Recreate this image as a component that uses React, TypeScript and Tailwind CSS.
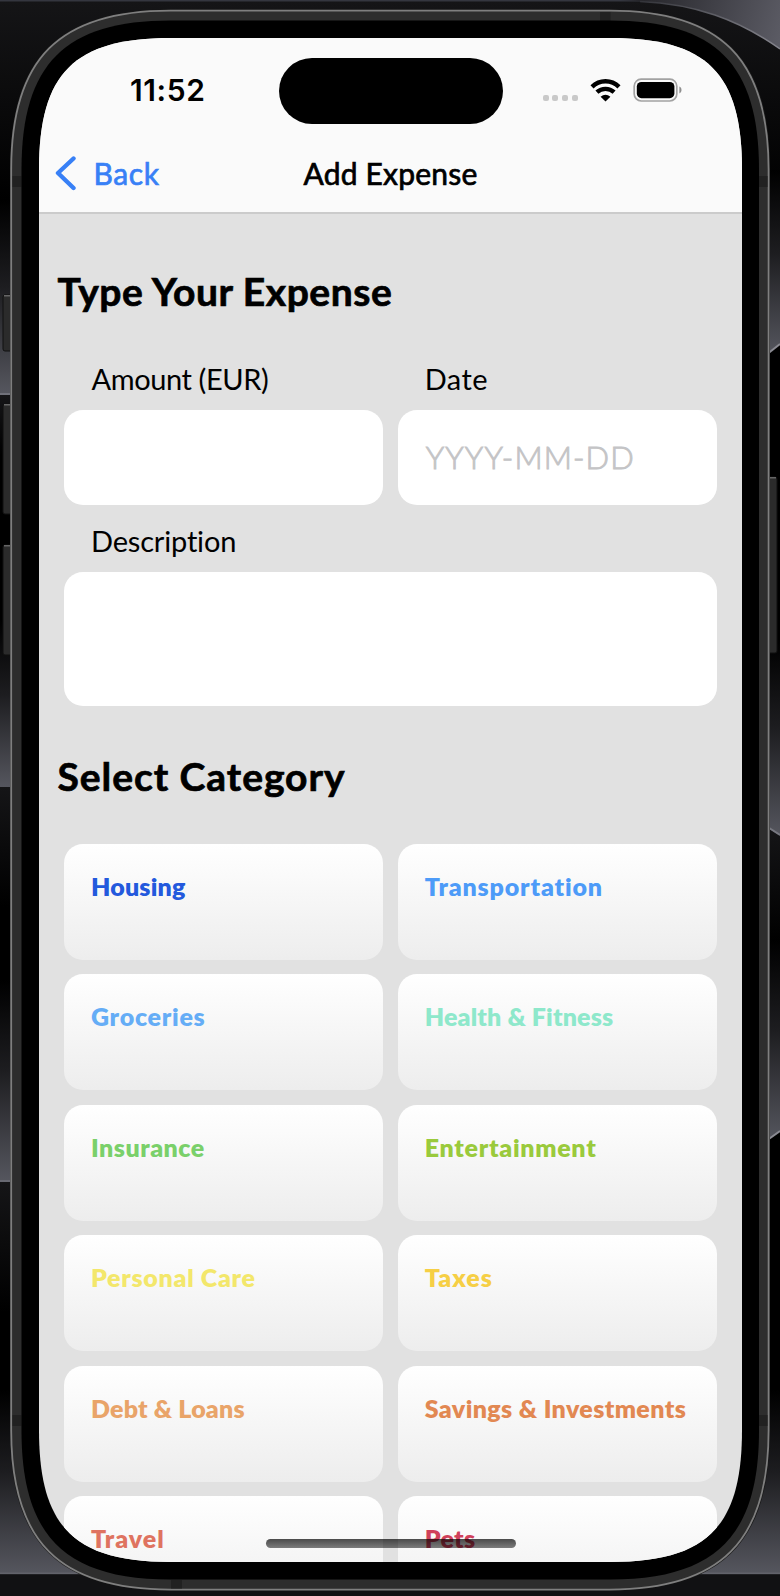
type Category = { name: string; style: string };

const categories: Category[] = [
  { name: 'Housing', style: 'text-[#2359dd] tracking-[0.17px]' },
  { name: 'Transportation', style: 'text-[#4d9bf8] tracking-[0.83px]' },
  { name: 'Groceries', style: 'text-[#65adf6] tracking-[0.72px]' },
  { name: 'Health & Fitness', style: 'text-[#8ee8cb] tracking-[0.15px]' },
  { name: 'Insurance', style: 'text-[#7ad06a] tracking-[0.5px]' },
  { name: 'Entertainment', style: 'text-[#9aca3c] tracking-[0.7px]' },
  { name: 'Personal Care', style: 'text-[#f3e76b] tracking-[0.7px]' },
  { name: 'Taxes', style: 'text-[#f6cf45] tracking-[1px]' },
  { name: 'Debt & Loans', style: 'text-[#e9a469] tracking-[0.18px]' },
  { name: 'Savings & Investments', style: 'text-[#e28852] tracking-[0.38px]' },
  { name: 'Travel', style: 'text-[#df7360] tracking-[0.95px]' },
  { name: 'Pets', style: 'text-[#d0405a] tracking-[0.3px]' },
];

/** Rounded rectangle with continuous corners: e is the corner extent, k the control offset. */
function squircle(x: number, y: number, w: number, h: number, e: number, k: number) {
  const r = x + w;
  const b = y + h;
  return [
    `M${x} ${y + e}`,
    `C${x} ${y + k} ${x + k} ${y} ${x + e} ${y}`,
    `H${r - e}`,
    `C${r - k} ${y} ${r} ${y + k} ${r} ${y + e}`,
    `V${b - e}`,
    `C${r} ${b - k} ${r - k} ${b} ${r - e} ${b}`,
    `H${x + e}`,
    `C${x + k} ${b} ${x} ${b - k} ${x} ${b - e}`,
    'Z',
  ].join('');
}

function Device() {
  return (
    <svg className="absolute inset-0" width="780" height="1596" viewBox="0 0 780 1596" fill="none">
      <defs>
        <linearGradient id="glow" x1="0" y1="0" x2="0" y2="1">
          <stop offset="0" stopColor="#000" />
          <stop offset="0.45" stopColor="#1d1d20" />
          <stop offset="1" stopColor="#55565e" />
        </linearGradient>
        <linearGradient id="fade" x1="0" y1="0" x2="0" y2="1">
          <stop offset="0" stopColor="#151517" />
          <stop offset="1" stopColor="#000" />
        </linearGradient>
        <linearGradient id="corner" x1="640" y1="0" x2="780" y2="40" gradientUnits="userSpaceOnUse">
          <stop offset="0" stopColor="#26262b" />
          <stop offset="1" stopColor="#5b5b64" />
        </linearGradient>
        <linearGradient id="edge" x1="640" y1="0" x2="780" y2="0" gradientUnits="userSpaceOnUse">
          <stop offset="0" stopColor="#33343a" />
          <stop offset="1" stopColor="#85858d" />
        </linearGradient>
      </defs>
      <rect width="780" height="1596" fill="#000" />
      <rect width="780" height="200" fill="url(#fade)" />
      <rect width="780" height="1.5" fill="#34363f" />
      <path d="M620 0C690 2 735 17 780 49V0Z" fill="url(#corner)" />
      <path d="M640 1.5C695 4 738 19 780 49" stroke="url(#edge)" strokeWidth="1.5" />

      <rect x="0" y="200" width="14" height="193" fill="url(#glow)" />
      <rect x="0" y="393" width="14" height="2" fill="#70717a" />
      <rect x="0" y="395" width="14" height="60" fill="url(#fade)" />
      <rect x="0" y="620" width="14" height="167" fill="url(#glow)" />
      <rect x="0" y="787" width="14" height="120" fill="url(#fade)" />
      <rect x="0" y="980" width="14" height="201" fill="url(#glow)" />
      <rect x="0" y="1180" width="14" height="2" fill="#686972" />
      <rect x="0" y="1182" width="14" height="130" fill="url(#fade)" />

      <path d="M766 170H780V344L766 355Z" fill="url(#glow)" />
      <path d="M766 355L780 344" stroke="#8a8a92" strokeWidth="2" />
      <path d="M766 640H780V836L766 827Z" fill="url(#glow)" />
      <path d="M766 827L780 836V940H766Z" fill="url(#fade)" />
      <path d="M766 826L780 835" stroke="#777880" strokeWidth="2" />
      <path d="M766 940H780V1131L766 1141Z" fill="url(#glow)" />
      <path d="M766 1141L780 1131" stroke="#8a8a92" strokeWidth="2" />

      <rect x="0" y="1390" width="780" height="183" fill="url(#glow)" />
      <rect x="0" y="1572.5" width="780" height="2" fill="#62636b" />
      <rect x="0" y="1574.5" width="780" height="22" fill="#111113" />

      <rect x="3" y="295" width="12" height="56" rx="2" fill="#2b2b2b" stroke="#111" />
      <rect x="4" y="295" width="8" height="1.5" fill="#666" />
      <rect x="3" y="404" width="12" height="110" rx="2" fill="#2b2b2b" stroke="#111" />
      <rect x="4" y="404" width="8" height="1.5" fill="#666" />
      <rect x="3" y="545" width="12" height="110" rx="2" fill="#2b2b2b" stroke="#111" />
      <rect x="4" y="545" width="8" height="1.5" fill="#666" />
      <rect x="765" y="477" width="12" height="176" rx="2" fill="#2b2b2b" stroke="#111" />
      <rect x="768" y="477" width="8" height="1.5" fill="#666" />

      <path d={squircle(10, 9.5, 760, 1581, 160, 48)} fill="#1a1a1a" />
      <path d={squircle(11.2, 10.6, 757.4, 1579, 159, 48)} fill="#2d2d2d" stroke="#7f7f7f" strokeWidth="1.8" />
      <g fill="#212121">
        <rect x="12.5" y="176" width="9" height="11" />
        <rect x="759" y="176" width="8.5" height="11" />
        <rect x="12.5" y="1415" width="9" height="11" />
        <rect x="759" y="1415" width="8.5" height="11" />
        <rect x="600" y="12" width="10.5" height="9" />
        <rect x="171" y="1580" width="11" height="8.5" />
      </g>
      <path d={squircle(21.5, 20.5, 737.5, 1559, 149, 43.5)} fill="#000" />
    </svg>
  );
}

function WifiIcon() {
  return (
    <svg className="ml-[12px] mt-[79px]" width="31" height="23" viewBox="0 0 31 23" fill="none" stroke="#000" strokeWidth="4.4">
      <path d="M2 7.8C9.6 .4 21.4 .4 29 7.8" />
      <path d="M6.9 13.2C11.8 8.7 19.2 8.7 24.1 13.2" />
      <path d="M15.5 22.5L10.6 17.7C13.6 15 17.4 15 20.4 17.7Z" fill="#000" stroke="none" />
    </svg>
  );
}

function BatteryIcon() {
  return (
    <svg className="ml-[12.5px] mt-[78px]" width="50" height="25" viewBox="0 0 50 25" fill="none">
      <rect x="1.2" y="1.2" width="42.6" height="21.8" rx="7" stroke="#a2a2a2" strokeWidth="1.7" />
      <rect x="3.8" y="4" width="37.6" height="16.2" rx="4.6" fill="#000" />
      <path d="M46.4 8.6C49.2 9.8 49.2 14.2 46.4 15.4Z" fill="#8f8f8f" />
    </svg>
  );
}

function StatusBar() {
  return (
    <div className="flex h-[92px] items-start">
      <div className="w-[239.5px] pl-[91px] pt-[34px] font-['Inter',sans-serif] text-[30px] font-[560] leading-9 tracking-[0.6px]">
        11:52
      </div>
      <div className="mt-5 h-[66px] w-[224px] rounded-full bg-black" />
      <div className="-mt-[38px] flex items-start">
        <div className="ml-[40px] mt-[95px] flex gap-[3.5px]">
          <span className="size-[6.2px] rounded-xs bg-[#c9c9c9]" />
          <span className="size-[6.2px] rounded-xs bg-[#c9c9c9]" />
          <span className="size-[6.2px] rounded-xs bg-[#c9c9c9]" />
          <span className="size-[6.2px] rounded-xs bg-[#c9c9c9]" />
        </div>
        <WifiIcon />
        <BatteryIcon />
      </div>
    </div>
  );
}

function NavBar() {
  return (
    <div className="grid h-[82px] grid-cols-[1fr_auto_1fr] items-start pt-[24px] text-[30px] leading-[38px]">
      <button className="flex items-start pl-4 text-[#3880f6]">
        <svg className="mt-0.5" width="22" height="36" viewBox="0 0 22 36" fill="none" stroke="currentColor" strokeWidth="4.4" strokeLinecap="round" strokeLinejoin="round">
          <path d="M18.5 2.5L3 17L18.5 32" />
        </svg>
        <span className="ml-[16.5px] tracking-[0.6px] [-webkit-text-stroke:0.7px]">Back</span>
      </button>
      <h1 className="tracking-[0.2px] [-webkit-text-stroke:0.7px]">Add Expense</h1>
    </div>
  );
}

export default function App() {
  return (
    <div className="relative h-[1596px] w-[780px] overflow-hidden bg-black pl-[39px] pt-[38px] font-['Lato',sans-serif] text-black">
      <Device />
      <div className="relative flex h-[1524px] w-[703px] flex-col overflow-hidden bg-[#e1e1e1] [clip-path:path('M0_132C0_35_35_0_132_0H571C668_0_703_35_703_132V1392C703_1489_668_1524_571_1524H132C35_1524_0_1489_0_1392Z')]">
        <header className="h-[176px] shrink-0 border-b-2 border-[#cbcbcb] bg-[#fafafa]">
          <StatusBar />
          <NavBar />
        </header>

        <main className="flex flex-col pl-[25px] pr-[25px] pt-[53px]">
          <h2 className="-ml-[6.5px] text-[39px] font-bold leading-[48px] tracking-[0.53px] [-webkit-text-stroke:0.7px]">
            Type Your Expense
          </h2>

          <div className="mt-[46px] grid grid-cols-2 gap-x-[14.5px] text-[29px]">
            <label className="flex flex-col gap-[13px]">
              <span className="pl-[27.5px] leading-9 tracking-[-0.4px]">Amount (EUR)</span>
              <span className="h-[95px] rounded-[19px] bg-white" />
            </label>
            <label className="flex flex-col gap-[13px]">
              <span className="pl-[27px] leading-9 tracking-[0.4px]">Date</span>
              <span className="flex h-[95px] items-center rounded-[19px] bg-white pl-[28px] text-[31px] font-light tracking-[1.1px] text-[#c4c4c6] [-webkit-text-stroke:0.9px]">
                YYYY-MM-DD
              </span>
            </label>
          </div>

          <label className="mt-[18px] flex flex-col gap-[12.5px] text-[29px]">
            <span className="pl-[27px] leading-9 tracking-[-0.18px]">Description</span>
            <span className="h-[134.5px] rounded-[19px] bg-white" />
          </label>

          <h2 className="-ml-[6.5px] mt-[45.5px] text-[39px] font-bold leading-[48px] tracking-[0.95px] [-webkit-text-stroke:0.7px]">
            Select Category
          </h2>

          <div className="mt-[44px] grid grid-cols-2 gap-x-[14.5px] gap-y-[14.5px]">
            {categories.map((c) => (
              <button
                key={c.name}
                className="flex h-[116px] items-start rounded-[19px] bg-linear-to-b from-white to-[#ededed] pl-[27px] pt-[27px] text-[25px] font-extrabold leading-[30px]"
              >
                <span className={c.style}>{c.name}</span>
              </button>
            ))}
          </div>
        </main>

        <div className="absolute left-[226.5px] top-[1500.5px] h-[9px] w-[250px] rounded-full bg-linear-to-b from-black/70 to-black/50" />
      </div>
    </div>
  );
}
